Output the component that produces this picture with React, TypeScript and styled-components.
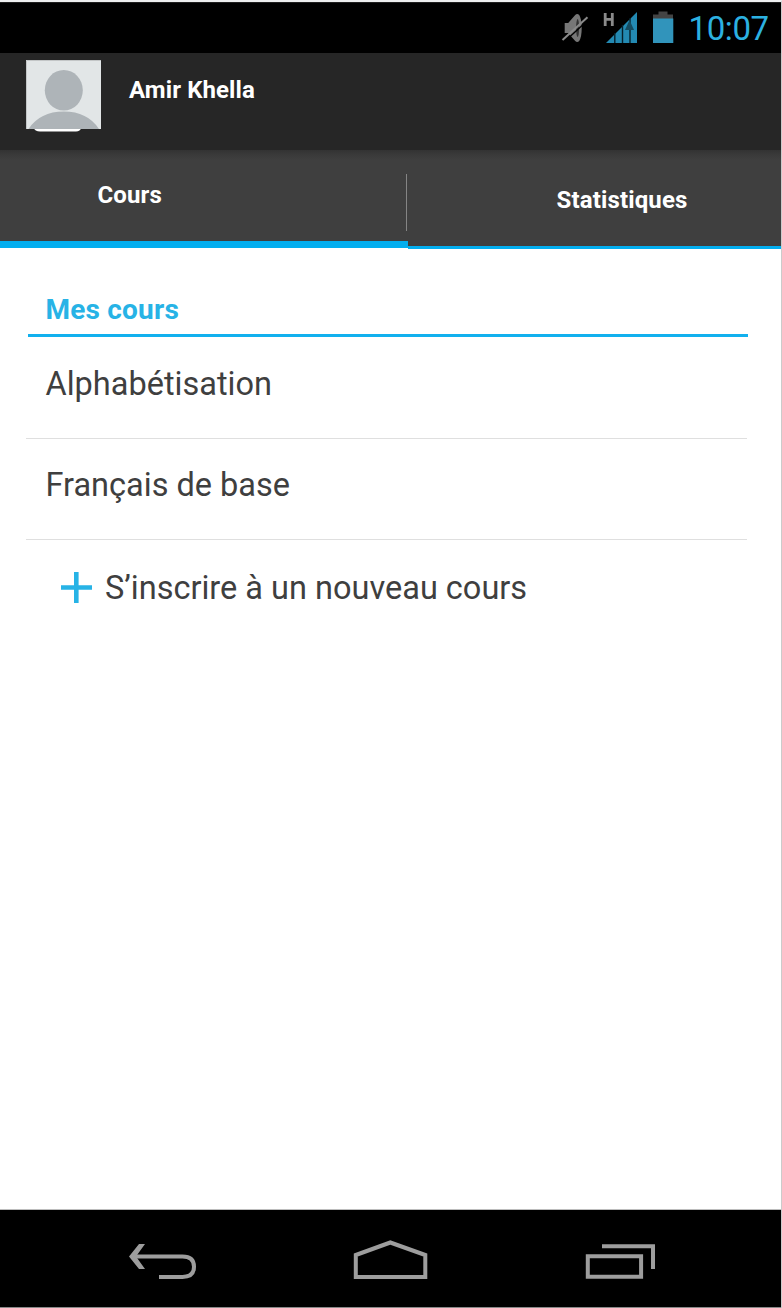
import React from "react";
import styled, { createGlobalStyle } from "styled-components";

const GlobalStyle = createGlobalStyle`
  * { box-sizing: border-box; }
  body { margin: 0; background: #fff; font-family: Roboto, "Liberation Sans", sans-serif; }
`;

const Screen = styled.div`
  display: flex;
  flex-direction: column;
  width: 782px;
  height: 1308px;
  overflow: hidden;
  background: #fff;
  border-top: 2px solid #eeeff0;
  border-right: 1px solid #cbcbcb;
`;

const StatusBar = styled.div`
  display: flex;
  flex: none;
  height: 51px;
  padding-left: 558px;
  background: #000;
  border-top: 1px solid #202020;
`;

const StatusIcons = styled.svg`
  flex: none;
  width: 124px;
  height: 50px;
`;

const Clock = styled.time`
  margin-left: 6.5px;
  padding-top: 7px;
  color: #2cb1e1;
  font-size: 33px;
  line-height: 38px;
  letter-spacing: -0.4px;
  white-space: nowrap;
`;

const Header = styled.header`
  display: flex;
  flex: none;
  height: 97px;
  padding: 6px 0 0 26px;
  background: #262626;
`;

const Avatar = styled.svg`
  flex: none;
  width: 75px;
  height: 73px;
`;

const UserName = styled.h1`
  margin: 16px 0 0 28px;
  color: #fff;
  font-size: 24px;
  font-weight: 700;
  line-height: 30px;
  letter-spacing: 0.1px;
  white-space: nowrap;
`;

const Tabs = styled.nav`
  display: flex;
  flex: none;
  height: 99px;
  background: linear-gradient(#333 0, #393939 4px, #3f3f3f 10px);
  background-size: 100% 96px;
  background-repeat: no-repeat;
`;

const Tab = styled.div<{ $active?: boolean }>`
  display: flex;
  width: ${(p) => (p.$active ? "408px" : "373px")};
  height: ${(p) => (p.$active ? "98px" : "99px")};
  padding: ${(p) => (p.$active ? "30px 0 0 97.5px" : "35px 0 0 148.5px")};
  border-bottom: ${(p) => (p.$active ? "7px" : "3px")} solid #03aeef;
  color: #fff;
  font-size: 24px;
  font-weight: 700;
  line-height: 30px;
  letter-spacing: 0.14px;
`;

const TabDivider = styled.span`
  flex: none;
  width: 1px;
  height: 57px;
  margin: -6px 1px 0 auto;
  background: #858585;
`;

const Content = styled.main`
  flex: 1;
  padding: 42px 34px 0 26px;
  color: #3f3f3f;
`;

const SectionTitle = styled.h2`
  height: 46px;
  margin: 0 -1px 1px 2px;
  padding-left: 17.5px;
  border-bottom: 3px solid #12b0ee;
  color: #27b3e6;
  font-size: 28px;
  font-weight: 700;
  line-height: 38px;
  letter-spacing: 0.2px;
`;

const CourseRow = styled.div<{ $last?: boolean }>`
  display: flex;
  align-items: center;
  height: ${(p) => (p.$last ? "103px" : "101px")};
  padding: 0 0 8px ${(p) => (p.$last ? "34px" : "19.5px")};
  border-bottom: ${(p) => (p.$last ? "none" : "1px solid #dfdfdf")};
  font-size: 32.5px;
  line-height: 40px;
  white-space: nowrap;
`;

const PlusIcon = styled.svg`
  flex: none;
  width: 32px;
  height: 32px;
  margin-right: 13px;
`;

const NavBar = styled.footer`
  display: flex;
  flex: none;
  height: 99px;
  background: #000;
  border-top: 1px solid #bdbdbd;
  border-bottom: 1px solid #888;
`;

const NavIcons = styled.svg`
  width: 781px;
  height: 97px;
`;

export default function App() {
  return (
    <>
      <GlobalStyle />
      <Screen>
        <StatusBar>
          <StatusIcons viewBox="558 3 124 50">
            <path d="M564.7 23h3.5l7-8q2-2 4 0 2.5 4 2.5 13t-2.5 13q-2 2-4 0l-7-8h-3.5z" fill="#777" />
            <ellipse cx="577.6" cy="28" rx="1.5" ry="9" fill="#333" />
            <path d="M564 42L589 19.2" stroke="#000" strokeWidth="1.4" />
            <path d="M562.5 40L587.5 17.3" stroke="#8a8a8a" strokeWidth="2" />
            <path d="M605.2 13v13M612.3 13v13M605 19.3h8" stroke="#8a8a8a" strokeWidth="2.8" fill="none" />
            <path d="M606 43L637 12v31z" fill="#2389b2" />
            <path d="M614.8 33v10M622.5 25v18M630 18v25" stroke="#06202a" strokeWidth="1.4" />
            <path d="M625 30L629.5 20l4.5 10z" fill="#154b60" />
            <path d="M653 19v-4.5h5.5v-3h9v3h5.5V19z" fill="#444" />
            <path d="M653 18.5h20.3V43H653z" fill="#3194bb" />
          </StatusIcons>
          <Clock>10:07</Clock>
        </StatusBar>
        <Header>
          <Avatar viewBox="0 0 75 73">
            <path d="M7 68h49q-2 4.5-6 4.5H14q-5 0-7-4.5z" fill="#fff" />
            <path d="M0 1h75V70H0z" fill="#e2e6e7" />
            <path d="M.5 70V1.5H75" fill="none" stroke="#c3c6c7" strokeWidth="1" />
            <ellipse cx="37.8" cy="31.3" rx="19" ry="20.3" fill="#aeb4b8" />
            <path d="M2.5 70Q14 52.5 37.8 52.5T73 70z" fill="#aeb4b8" />
          </Avatar>
          <UserName>Amir Khella</UserName>
        </Header>
        <Tabs>
          <Tab $active>
            Cours
            <TabDivider />
          </Tab>
          <Tab>Statistiques</Tab>
        </Tabs>
        <Content>
          <SectionTitle>Mes cours</SectionTitle>
          <CourseRow>Alphabétisation</CourseRow>
          <CourseRow>Français de base</CourseRow>
          <CourseRow $last>
            <PlusIcon viewBox="0 0 32 32">
              <path d="M1 15.5h31M16.3 0v31" stroke="#27b3e6" strokeWidth="4.6" />
            </PlusIcon>
            S’inscrire à un nouveau cours
          </CourseRow>
        </Content>
        <NavBar>
          <NavIcons viewBox="0 1210 781 97" fill="none" stroke="#9d9d9d" strokeWidth="4">
            <path d="M133 1256.5h49.5q11.5 0 11.5 10.2t-11.5 10.2H159" />
            <path d="M139 1244h6l-9 12.5 9 12.5h-6L129 1256.5z" fill="#9d9d9d" stroke="none" />
            <path d="M355.8 1277V1255L390.3 1242.5 425.3 1255V1277z" />
            <path d="M587.8 1256.2h53.3v20.6h-53.3zM602 1246.2h51v22.8" />
          </NavIcons>
        </NavBar>
      </Screen>
    </>
  );
}
